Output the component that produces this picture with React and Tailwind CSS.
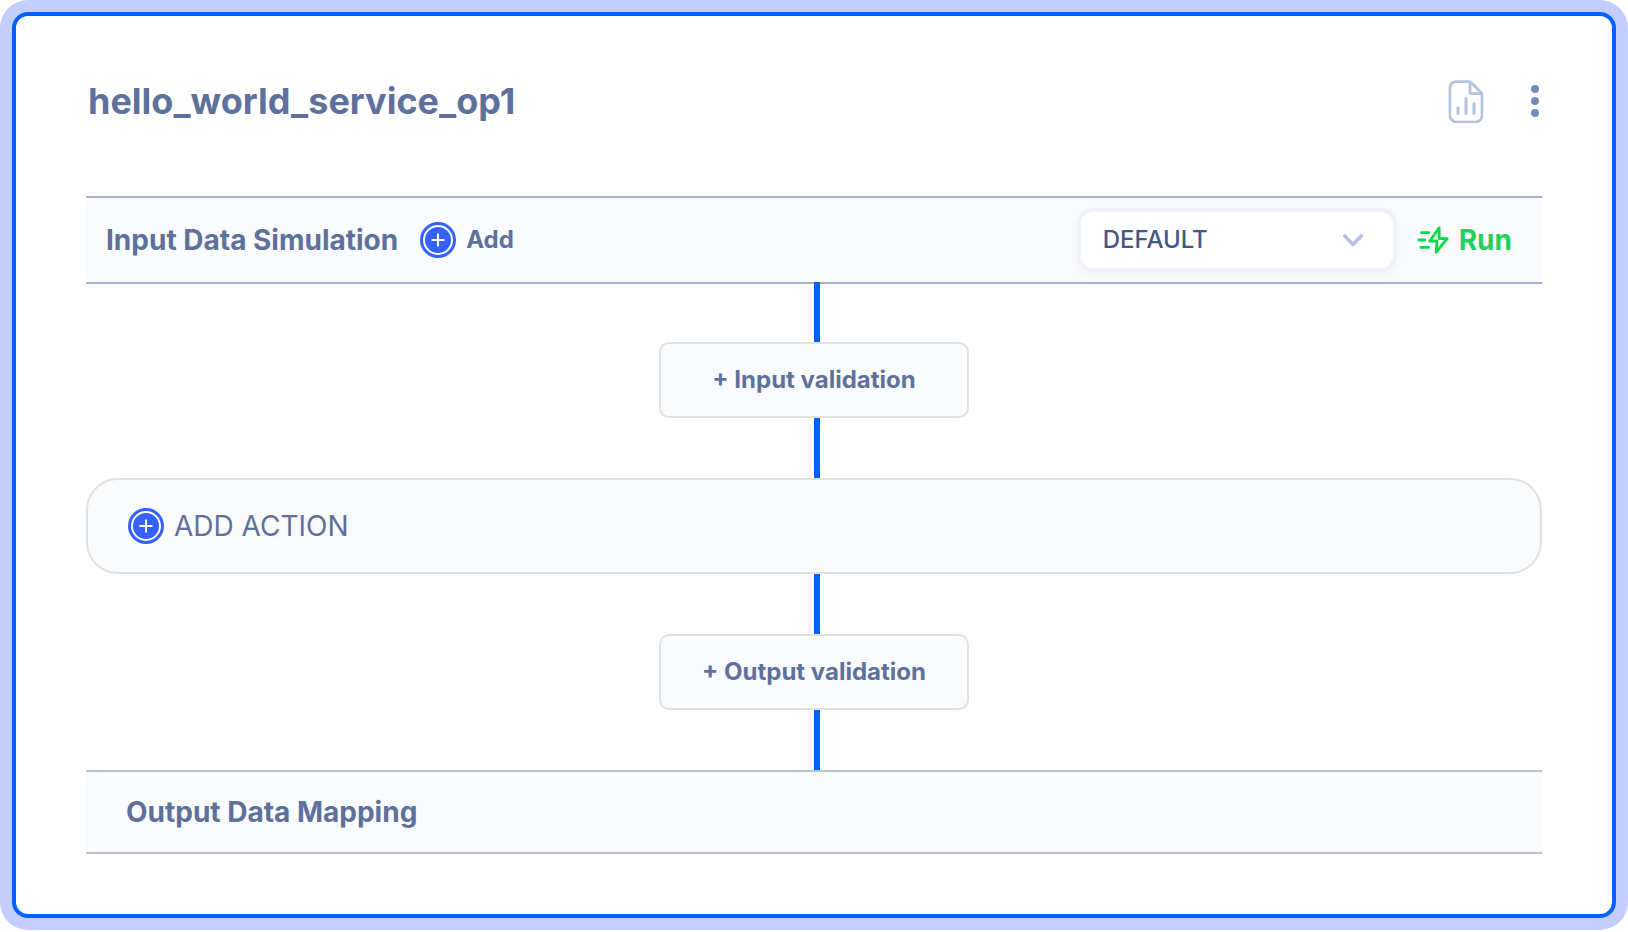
function PlusBadge() {
  return (
    <svg className="size-9 shrink-0" viewBox="0 0 36 36" fill="none" aria-hidden="true">
      <circle cx="18" cy="18" r="18" fill="#3461ff" />
      <circle cx="18" cy="18" r="14" stroke="#ffffff" strokeWidth="2" />
      <path d="M18 11.5v13M11.5 18h13" stroke="#ffffff" strokeWidth="2" />
    </svg>
  );
}

function ReportIcon() {
  return (
    <svg className="h-11 w-9" viewBox="0 0 36 44" fill="none" stroke="#b3c3de" strokeWidth="2.7" strokeLinecap="round" strokeLinejoin="round" aria-hidden="true">
      <path d="M9 2.6H20.4Q22.3 2.6 23.6 4L32.6 13Q34 14.4 34 16.3V35.6Q34 43 26.6 43H9Q1.9 43 1.9 35.6V9.7Q1.9 2.6 9 2.6Z" />
      <path d="M22 3.2V13Q22 14.6 23.6 14.6H33.2" />
      <path d="M10 28.8v5.6M18 19.6V34.4M26 24.6V34.4" strokeWidth="3" />
    </svg>
  );
}

function RunIcon() {
  return (
    <svg className="h-7 w-8" viewBox="0 0 32 28" fill="none" stroke="#00dc46" strokeWidth="2.8" strokeLinecap="round" strokeLinejoin="round" aria-hidden="true">
      <path d="M22.2 1.8 12.8 15H20L19.2 26 30.2 12.6H22.2Z" />
      <path d="M4.4 6.6h7.4M1.8 14h6M3.8 21.4h7.8" />
    </svg>
  );
}

function Connector({ overlap = false }) {
  return (
    <div
      aria-hidden="true"
      className={
        overlap
          ? "relative -mt-0.5 ml-[50%] h-15 w-1.5 bg-[#0061ff]"
          : "ml-[50%] h-15 w-1.5 bg-[#0061ff]"
      }
    />
  );
}

function ValidationButton({ children }) {
  return (
    <button type="button" className="mx-auto h-19 w-[310px] rounded-[10px] border-2 border-[#e1e1e1] bg-[#fafbfd] text-2xl font-bold">
      {children}
    </button>
  );
}

export default function App() {
  return (
    <main className="rounded-[28px] bg-[#c3ceff] p-3 font-['Inter',sans-serif] text-[#5e719c]">
      <section className="flex flex-col rounded-2xl border-4 border-[#0061ff] bg-white px-[70px] pb-15">
        <header className="flex h-45 items-center justify-between pb-2.5">
          <h1 className="pl-0.5 text-4xl font-bold">hello_world_service_op1</h1>
          <div className="flex items-center gap-8">
            <button type="button" aria-label="Report">
              <ReportIcon />
            </button>
            <button type="button" aria-label="More options" className="pl-2.5">
              <svg className="h-8 w-4" viewBox="0 0 16 32" fill="#718ebb" aria-hidden="true">
                <circle cx="9" cy="4" r="4" />
                <circle cx="9" cy="16" r="4" />
                <circle cx="9" cy="28" r="4" />
              </svg>
            </button>
          </div>
        </header>

        <div className="flex items-center justify-between border-y-2 border-[#a1b0d0] bg-[#fafbfd] py-2.5 pr-[30px] pl-5">
          <div className="flex items-center gap-[22px]">
            <h2 className="text-[28px] font-bold">Input Data Simulation</h2>
            <button type="button" className="flex items-center gap-2.5 text-2xl font-bold">
              <PlusBadge />
              Add
            </button>
          </div>
          <div className="flex items-center gap-5">
            <div className="relative">
              <select aria-label="Simulation data" className="h-16 w-80 appearance-none rounded-2xl border-4 border-[#f1f2f7] bg-white pl-[22px] text-2xl font-medium text-[#435685] shadow-[0_4px_10px_rgba(67,86,133,0.04)]">
                <option>DEFAULT</option>
              </select>
              <svg className="pointer-events-none absolute top-6.5 right-8 h-3.5 w-6" viewBox="0 0 24 14" fill="none" stroke="#b3c3de" strokeWidth="3.6" strokeLinecap="round" strokeLinejoin="round" aria-hidden="true">
                <path d="M3.8 2 12 10.4 20.2 2" />
              </svg>
            </div>
            <button type="button" className="flex items-center gap-2.5 text-[28px] font-bold text-[#1ed35b]">
              <RunIcon />
              Run
            </button>
          </div>
        </div>

        <Connector overlap />
        <ValidationButton>+ Input validation</ValidationButton>
        <Connector />
        <button type="button" className="flex h-24 items-center gap-2.5 rounded-[32px] border-2 border-[#e1e1e1] bg-[#fafbfd] px-10 text-[28px]">
          <PlusBadge />
          ADD ACTION
        </button>
        <Connector />
        <ValidationButton>+ Output validation</ValidationButton>
        <Connector />

        <div className="flex h-21 items-center border-y-2 border-[#b6c3dc] bg-[#fafbfd] px-10">
          <h2 className="text-[28px] font-bold">Output Data Mapping</h2>
        </div>
      </section>
    </main>
  );
}
